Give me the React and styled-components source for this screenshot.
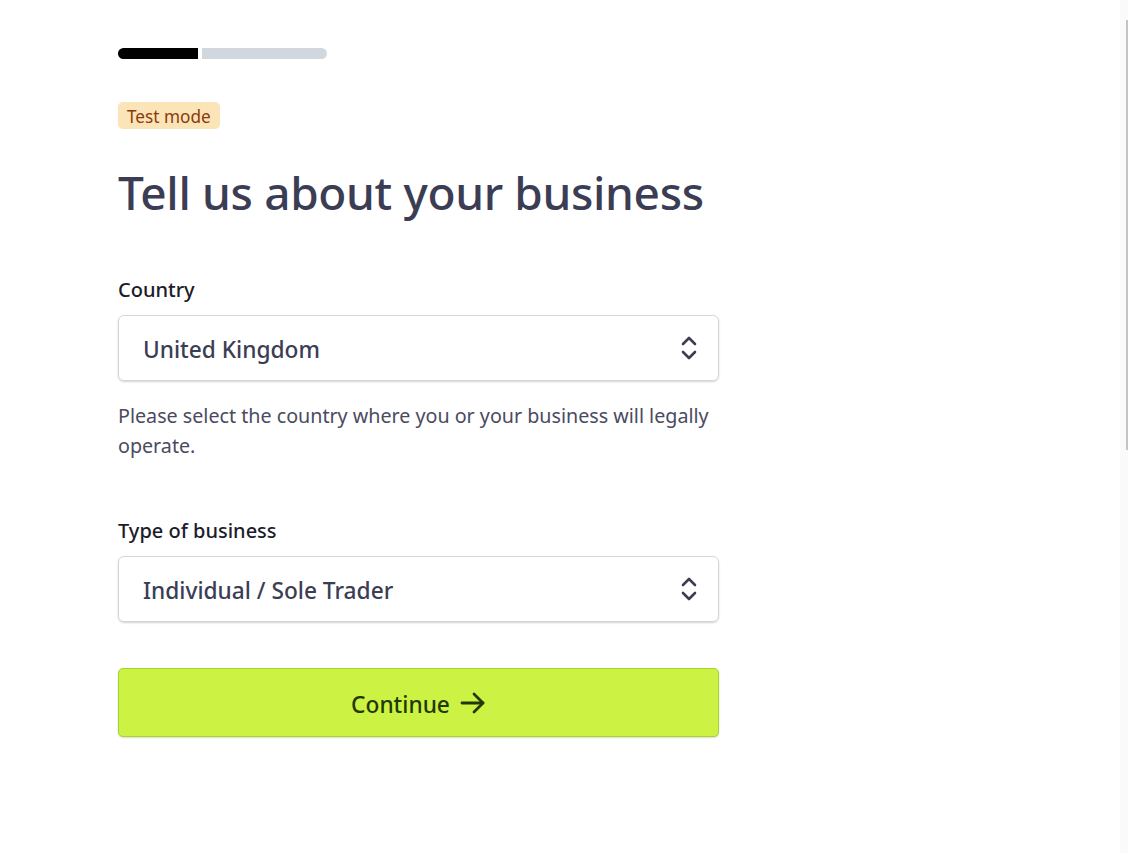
import React from 'react';
import styled, { createGlobalStyle } from 'styled-components';

const GlobalStyle = createGlobalStyle`
  html, body {
    margin: 0;
    padding: 0;
    background: #fff;
    font-family: "Noto Sans", "Open Sans", sans-serif;
  }
`

const Page = styled.div`
  display: flex;
  min-height: 853px;
  width: 1128px;
`
const Main = styled.main`
  flex: 1;
  padding: 48px 0 0 118px;
`
const Edge = styled.div`
  width: 8px;
  background: #fafafa;
  display: flex;
  justify-content: flex-end;
  padding-top: 20px;
`
const EdgeLine = styled.div`
  width: 2px;
  height: 430px;
  background: #c4c4c4;
`
const Form = styled.div`
  width: 601px;
  display: flex;
  flex-direction: column;
`
const Progress = styled.div`
  display: flex;
  gap: 4px;
  height: 11px;
`
const Step = styled.div`
  width: ${props => props.w}px;
  background: ${props => props.done ? "#000" : "#d0d7df"};
  border-radius: ${props => props.done ? "6px 0 0 6px" : "0 6px 6px 0"};
`
const Badge = styled.span`
  align-self: flex-start;
  margin-top: 43px;
  padding: 4px 9px 1px;
  border-radius: 5px;
  background: #fbe4b7;
  color: #8a3a0b;
  font-size: 17.2px;
  line-height: 22px;
`
const Title = styled.h1`
  margin: 32px 0 0;
  font-size: 46px;
  font-weight: 500;
  line-height: 62px;
  color: #3b3d55;
  letter-spacing: -0.35px;
  white-space: nowrap;
`
const Field = styled.div`
  margin-top: ${props => props.top}px;
  display: flex;
  flex-direction: column;
`
const Label = styled.label`
  font-size: 20px;
  font-weight: 500;
  color: #1c1c2a;
  line-height: 26px;
  margin-bottom: 12px;
`
const Select = styled.div`
  height: 66px;
  box-sizing: border-box;
  border: 1px solid #d6d6d6;
  border-radius: 6px;
  box-shadow: 0 1px 2px rgba(0,0,0,0.18);
  display: flex;
  align-items: center;
  justify-content: space-between;
  padding: 3px 20px 0 24px;
  font-size: 22.7px;
  font-weight: 500;
  color: #3b3d55;

  svg {
    margin-top: -3px;
  }
`
const Help = styled.p`
  margin: 20px 0 0;
  font-size: 19.7px;
  line-height: 30px;
  color: #4a4b60;
`
const Button = styled.button`
  margin-top: 46px;
  height: 69px;
  padding-top: 4px;
  border: 1px solid #a9d42c;
  border-radius: 5px;
  background: #ccf243;
  color: #1f3a05;
  font-family: inherit;
  font-size: 22.7px;
  font-weight: 500;
  display: flex;
  align-items: center;
  justify-content: center;
  gap: 10px;
  box-shadow: 0 1px 2px rgba(0,0,0,0.15);

  svg {
    margin-top: -2px;
  }
`

const Chevrons = () => (
  <svg width="18" height="26" viewBox="0 0 18 26" fill="none" stroke="#3b3d55" strokeWidth="2.6" strokeLinecap="round" strokeLinejoin="round">
    <path d="M3 9 L9 3 L15 9" />
    <path d="M3 17 L9 23 L15 17" />
  </svg>
)

const Arrow = () => (
  <svg width="26" height="24" viewBox="0 0 26 24" fill="none" stroke="#1f3a05" strokeWidth="2.8" strokeLinecap="round" strokeLinejoin="round">
    <path d="M2 12 H23" />
    <path d="M14 3 L23 12 L14 21" />
  </svg>
)

export default function App() {
  return (
    <Page>
      <GlobalStyle />
      <Main>
        <Form>
          <Progress>
            <Step done w={80} />
            <Step w={125} />
          </Progress>
          <Badge>Test mode</Badge>
          <Title>Tell us about your business</Title>
          <Field top={54}>
            <Label>Country</Label>
            <Select>
              United Kingdom
              <Chevrons />
            </Select>
            <Help>Please select the country where you or your business will legally operate.</Help>
          </Field>
          <Field top={57}>
            <Label>Type of business</Label>
            <Select>
              Individual / Sole Trader
              <Chevrons />
            </Select>
          </Field>
          <Button>
            Continue
            <Arrow />
          </Button>
        </Form>
      </Main>
      <Edge>
        <EdgeLine />
      </Edge>
    </Page>
  )
}
